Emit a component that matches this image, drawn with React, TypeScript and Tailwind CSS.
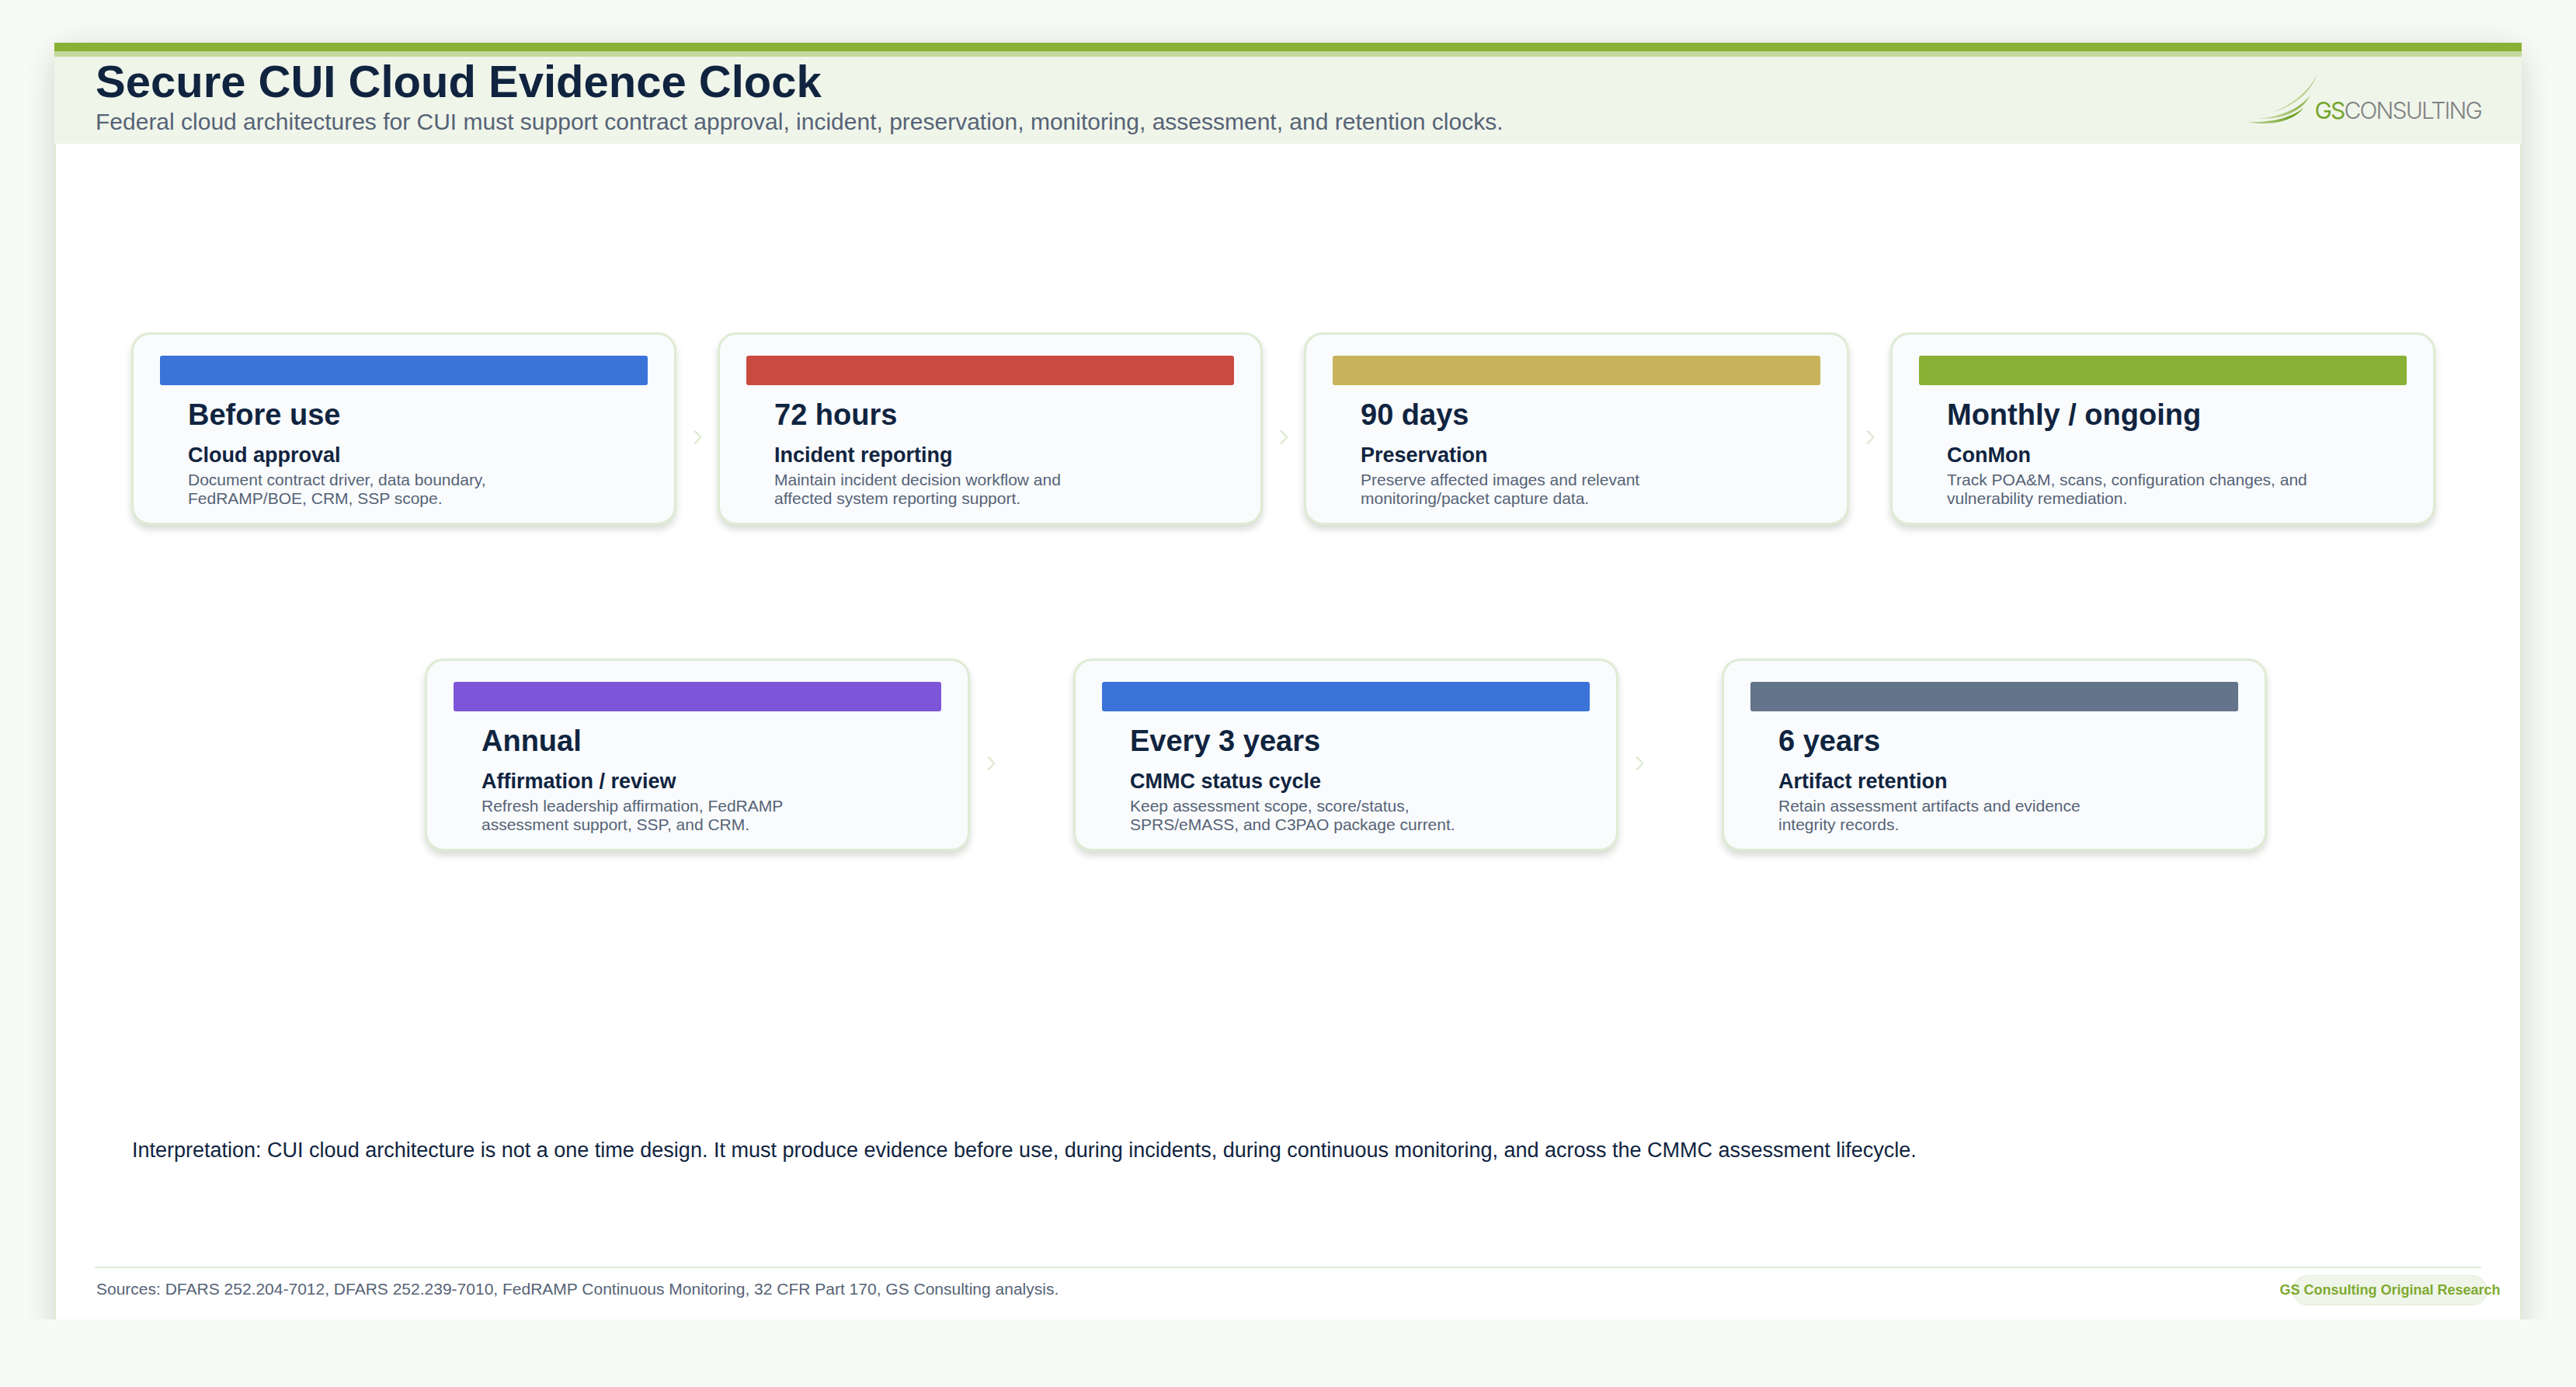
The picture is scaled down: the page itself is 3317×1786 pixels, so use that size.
const sans = "font-['Liberation_Sans',Arial,sans-serif]";

type Step = { bar: string; when: string; title: string; lines: string[] };

const row1: Step[] = [
  { bar: "bg-[#3b73d9]", when: "Before use", title: "Cloud approval", lines: ["Document contract driver, data boundary,", "FedRAMP/BOE, CRM, SSP scope."] },
  { bar: "bg-[#c94b3f]", when: "72 hours", title: "Incident reporting", lines: ["Maintain incident decision workflow and", "affected system reporting support."] },
  { bar: "bg-[#c8b35a]", when: "90 days", title: "Preservation", lines: ["Preserve affected images and relevant", "monitoring/packet capture data."] },
  { bar: "bg-[#88b135]", when: "Monthly / ongoing", title: "ConMon", lines: ["Track POA&M, scans, configuration changes, and", "vulnerability remediation."] },
];

const row2: Step[] = [
  { bar: "bg-[#7d55d9]", when: "Annual", title: "Affirmation / review", lines: ["Refresh leadership affirmation, FedRAMP", "assessment support, SSP, and CRM."] },
  { bar: "bg-[#3b73d9]", when: "Every 3 years", title: "CMMC status cycle", lines: ["Keep assessment scope, score/status,", "SPRS/eMASS, and C3PAO package current."] },
  { bar: "bg-[#64748b]", when: "6 years", title: "Artifact retention", lines: ["Retain assessment artifacts and evidence", "integrity records."] },
];

function Card({ s }: { s: Step }) {
  return (
    <div className="w-[702px] h-[248px] shrink-0 rounded-[24px] border-[3px] border-[#dfebd4] bg-[#f9fbfd] shadow-[0_6px_10px_rgba(60,80,50,0.2)] pt-[27px] px-[34px]">
      <div className={`h-[38px] w-[628px] rounded-[3px] ${s.bar}`} />
      <div className="pl-[36px]">
        <div className="mt-[15px] text-[38px] leading-[46px] font-bold text-[#10243f]">{s.when}</div>
        <div className="mt-[13px] text-[27px] leading-[32px] font-bold text-[#10243f]">{s.title}</div>
        <div className="mt-[4px] text-[21px] leading-[24px] text-[#566376] whitespace-nowrap">
          {s.lines.map((l) => (
            <div key={l}>{l}</div>
          ))}
        </div>
      </div>
    </div>
  );
}

function Arrow() {
  return (
    <div className="w-[53px] h-[248px] shrink-0 flex items-center justify-center pt-[22px]">
      <svg width="12" height="18" viewBox="0 0 12 18" fill="none">
        <path d="M1.5 1 L9.5 9 L1.5 17 L4 17 L11 9 L4 1 Z" fill="#dce9cf" stroke="#dce9cf" strokeWidth="1" />
      </svg>
    </div>
  );
}

function Logo() {
  return (
    <div className="flex items-start">
      <svg width="94" height="72" viewBox="280 180 280 215" className="shrink-0">
        <defs>
          <linearGradient id="s1" x1="0" y1="1" x2="1" y2="0">
            <stop offset="0" stopColor="#d3e2ba" />
            <stop offset="0.6" stopColor="#b4cf8a" />
            <stop offset="1" stopColor="#cfe0b5" />
          </linearGradient>
          <linearGradient id="s2" x1="0" y1="1" x2="1" y2="0">
            <stop offset="0" stopColor="#c5d9a3" />
            <stop offset="0.7" stopColor="#8fb552" />
            <stop offset="1" stopColor="#a9c97a" />
          </linearGradient>
          <linearGradient id="s3" x1="0" y1="1" x2="1" y2="0">
            <stop offset="0" stopColor="#b7d08c" />
            <stop offset="0.6" stopColor="#6f9f2b" />
            <stop offset="1" stopColor="#86b237" />
          </linearGradient>
        </defs>
        <path d="M370 346 C450 318 525 262 553 187 C535 265 455 325 370 346 Z" fill="url(#s1)" />
        <path d="M328 367 C410 362 490 325 525 275 C495 340 415 372 328 367 Z" fill="url(#s2)" />
        <path d="M284 379 C360 385 450 368 498 325 C465 378 365 398 284 379 Z" fill="url(#s3)" />
      </svg>
      <div className="ml-[-7px] mt-[34px] text-[30px] leading-[36px] font-['Inter',sans-serif] font-light tracking-[-1.8px] text-[#7f8184] whitespace-nowrap">
        <span className="font-normal text-[#76a52d]">GS</span>CONSULTING
      </div>
    </div>
  );
}

export default function App() {
  return (
    <div className={`w-[3317px] h-[1786px] bg-[#f8faf5] overflow-hidden ${sans}`}>
      <div className="h-[1699px] overflow-hidden pt-[55px] px-[70px]">
        <div className="relative h-[1700px] rounded-[28px] bg-white border-x-2 border-[#dfebd4] shadow-[0_8px_40px_rgba(40,60,30,0.18)]">
          <div className="absolute left-[-2px] right-[-2px] top-0 h-[11px] bg-[#88b135]" />
          <div className="absolute left-[-2px] right-[-2px] top-[11px] h-[7px] bg-[#c2d89b]" />
          <header className="mx-[-2px] h-[130px] rounded-t-[28px] bg-[#f0f5ea] flex justify-between pl-[53px] pr-[52px] pt-[17px]">
            <div>
              <h1 className="text-[58px] leading-[66px] font-bold text-[#10243f] whitespace-nowrap">Secure CUI Cloud Evidence Clock</h1>
              <p className="mt-[1px] text-[30px] leading-[36px] text-[#566376] whitespace-nowrap">
                Federal cloud architectures for CUI must support contract approval, incident, preservation, monitoring, assessment, and retention clocks.
              </p>
            </div>
            <div className="pt-[18px]">
              <Logo />
            </div>
          </header>
          <div className="flex mt-[243px] ml-[97px]">
            {row1.map((s, i) => (
              <div key={s.when} className="flex">
                <Card s={s} />
                {i < row1.length - 1 && <Arrow />}
              </div>
            ))}
          </div>
          <div className="flex gap-[80px] mt-[172px] ml-[475px]">
            {row2.map((s, i) => (
              <div key={s.when} className="flex">
                <Card s={s} />
                {i < row2.length - 1 && <Arrow />}
              </div>
            ))}
          </div>
          <p className="mt-[368px] ml-[98px] text-[27px] leading-[34px] text-[#10243f] whitespace-nowrap">
            Interpretation: CUI cloud architecture is not a one time design. It must produce evidence before use, during incidents, during continuous monitoring, and across the CMMC assessment lifecycle.
          </p>
          <div className="mt-[133px] mx-[50px] h-[2px] bg-[#dfebd4]" />
          <div className="flex justify-between mt-[9px] ml-[52px] mr-[42px]">
            <p className="pt-[4px] text-[21px] leading-[28px] text-[#566376] whitespace-nowrap">
              Sources: DFARS 252.204-7012, DFARS 252.239-7010, FedRAMP Continuous Monitoring, 32 CFR Part 170, GS Consulting analysis.
            </p>
            <div className="w-[251px] h-[39px] rounded-full bg-[#f0f5ea] border border-[#e3ecd9] flex items-center justify-center">
              <span className="text-[18px] font-bold text-[#7eaa31] whitespace-nowrap">GS Consulting Original Research</span>
            </div>
          </div>
        </div>
      </div>
    </div>
  );
}
